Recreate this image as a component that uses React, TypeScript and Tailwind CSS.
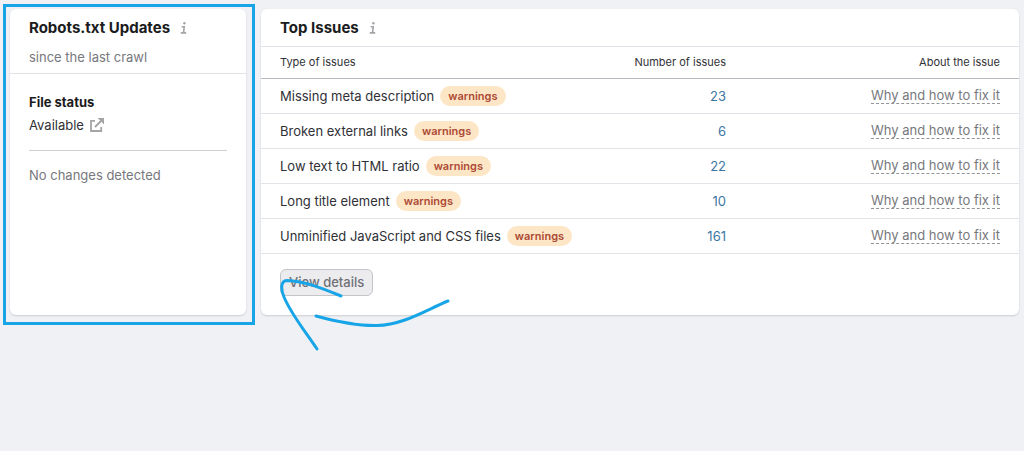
interface Issue {
  readonly name: string;
  readonly count: number;
}

const ISSUES: ReadonlyArray<Issue> = [
  { name: 'Missing meta description', count: 23 },
  { name: 'Broken external links', count: 6 },
  { name: 'Low text to HTML ratio', count: 22 },
  { name: 'Long title element', count: 10 },
  { name: 'Unminified JavaScript and CSS files', count: 161 },
];

function InfoIcon() {
  return (
    <svg aria-hidden="true" width="8" height="12" viewBox="0 0 8 12" fill="none">
      <circle cx="4.4" cy="1.3" r="1.2" fill="#a3a4a8" />
      <path d="M1.6 4.7H4.2L3.6 10.7M0.8 10.9H6.2" stroke="#a3a4a8" strokeWidth="1.6" />
    </svg>
  );
}

function ExternalLinkIcon() {
  return (
    <svg aria-hidden="true" width="14" height="14" viewBox="0 0 14 14" fill="none">
      <path
        d="M5 2.8H1V13H11.2V9M5 9L12 2"
        stroke="#a5a5a7"
        strokeWidth="1.8"
      />
      <path d="M7.6 0H14V6.4Z" fill="#a5a5a7" />
    </svg>
  );
}

function RobotsCard() {
  return (
    <section className="relative w-[236px] shrink-0 rounded-md bg-white shadow-[0_1px_2px_rgba(25,27,35,0.16)]">
      <header className="border-b border-[#dfe1e5] px-[19px] pt-[7px] pb-1.5">
        <div className="flex items-center gap-2.5">
          <h2 className="text-[15px] leading-6 font-bold text-[#1b1c20]">Robots.txt Updates</h2>
          <InfoIcon />
        </div>
        <p className="mt-[7px] text-[13px] leading-5 text-[#77787d]">since the last crawl</p>
      </header>
      <div className="px-[19px] pt-[18px] text-[13px] leading-5">
        <h3 className="font-bold text-[#1b1c20]">File status</h3>
        <a href="#robots" className="mt-[3px] flex items-center gap-1.5 text-[#303136]">
          Available
          <ExternalLinkIcon />
        </a>
        <hr className="mt-[15px] border-[#cfd0d3]" />
        <p className="mt-[14px] text-[#77787d]">No changes detected</p>
      </div>
      <div
        aria-hidden="true"
        className="pointer-events-none absolute -top-[5px] -right-[9px] -bottom-2.5 -left-[7px] border-3 border-[#18a5e8]"
      />
    </section>
  );
}

function IssueRow({ name, count }: Issue) {
  return (
    <tr className="h-[35px] border-b border-[#e2e3e8]">
      <td className="pl-[19px] text-[13px] leading-5 text-[#303136]">
        <span className="flex items-center gap-1.5">
          {name}
          <span className="rounded-full bg-[#fde6c6] px-2 text-[11px] leading-5 font-semibold text-[#ad4a35]">
            warnings
          </span>
        </span>
      </td>
      <td className="text-right text-[13px] leading-5">
        <a href="#issues" className="text-[#3b76a3]">{count}</a>
      </td>
      <td className="pr-[19px] text-right text-[13px] leading-4">
        <a href="#fix" className="inline-block border-b border-dashed border-[#939498] text-[#77787d]">
          Why and how to fix it
        </a>
      </td>
    </tr>
  );
}

function TopIssuesCard() {
  return (
    <section className="relative min-w-0 flex-1 rounded-md bg-white shadow-[0_1px_2px_rgba(25,27,35,0.16)]">
      <header className="flex items-center gap-2.5 border-b border-[#e2e3e8] px-[19px] pt-[7px] pb-1.5">
        <h2 className="text-[15px] leading-6 font-bold text-[#1b1c20]">Top Issues</h2>
        <InfoIcon />
      </header>
      <table className="w-full table-fixed border-collapse">
        <thead>
          <tr className="h-[31px] border-b border-[#b9babf] text-[11px] text-[#303136]">
            <th className="w-[44%] pl-[19px] text-left font-normal">Type of issues</th>
            <th className="text-right font-normal">Number of issues</th>
            <th className="w-[293px] pr-[19px] text-right font-normal">About the issue</th>
          </tr>
        </thead>
        <tbody>
          {ISSUES.map((issue) => (
            <IssueRow key={issue.name} {...issue} />
          ))}
        </tbody>
      </table>
      <div className="px-[19px] pt-[15px] pb-[19px]">
        <button
          type="button"
          className="block rounded-md border border-[#c4c5c9] bg-[#ececef] px-2 text-[13px] leading-[25px] font-medium text-[#707177]"
        >
          View details
        </button>
      </div>
      {/* hand-drawn arrow pointing at the robots card */}
      <svg
        aria-hidden="true"
        className="pointer-events-none absolute -bottom-9 left-[15px]"
        width="180"
        height="80"
        viewBox="276 271 180 80"
        fill="none"
        stroke="#18a5e8"
        strokeWidth="3"
        strokeLinecap="round"
        strokeLinejoin="round"
      >
        <path d="M316 316C338 322 357 326 377 325.500C403 325 426 310 448 301" />
        <path d="M341 296C324 289 305 281 287 280.500C280 281 281 290 284 297C291 314 305 331 317 349" />
      </svg>
    </section>
  );
}

export default function App() {
  return (
    <main className="min-h-screen bg-[#f0f1f5] pt-[9px] pr-[5px] pl-2.5 font-[Inter,'Liberation_Sans',sans-serif]">
      <div className="flex gap-[15px]">
        <RobotsCard />
        <TopIssuesCard />
      </div>
    </main>
  );
}
